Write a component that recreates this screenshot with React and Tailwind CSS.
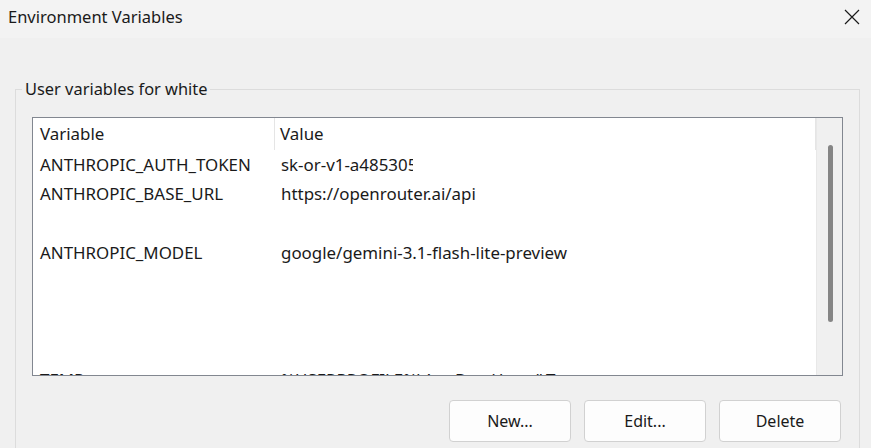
import React from 'react';

const rows = [
  { name: 'ANTHROPIC_AUTH_TOKEN', value: 'sk-or-v1-a485305', clip: true },
  { name: 'ANTHROPIC_BASE_URL', value: 'https://openrouter.ai/api' },
  { name: '', value: '' },
  { name: 'ANTHROPIC_MODEL', value: 'google/gemini-3.1-flash-lite-preview' },
];

const font = { fontFamily: '"Segoe UI", "Noto Sans", sans-serif' };

const Button = ({ children }) => (
  <button className="w-[122px] h-[42px] rounded-[4px] border border-[#d1d1d1] bg-[#fdfdfd] text-[16px] text-[#1a1a1a]">
    {children}
  </button>
);

export default function App() {
  return (
    <div className="w-[871px] h-[448px] overflow-hidden bg-[#f0f0f0] text-[#1a1a1a]" style={font}>
      <div className="h-[38px] bg-[#f3f3f3] flex items-center justify-between pl-2 pr-[11px]">
        <span className="text-[16.5px] -mt-[4px]">Environment Variables</span>
        <svg width="16" height="16" viewBox="0 0 16 16" className="-mt-[5px]">
          <path d="M1 1 L15 15 M15 1 L1 15" stroke="#1a1a1a" strokeWidth="1.2" fill="none" />
        </svg>
      </div>

      <div className="relative ml-[15px] mr-[11px] mt-[51px] h-[400px] border border-[#dcdcdc]">
        <span className="absolute -top-[13px] left-[6px] bg-[#f0f0f0] px-[3px] text-[16.4px] leading-[24px]">
          User variables for white
        </span>

        <div className="ml-[16px] mr-[16px] mt-[27px] h-[259px] border border-[#828790] bg-white flex overflow-hidden">
          <div className="flex-1 flex flex-col overflow-hidden text-[16.9px]">
            <div className="h-[32px] flex items-center shrink-0">
              <div className="w-[242px] pl-[7px] h-full flex items-center border-r border-[#e5e5e5]">Variable</div>
              <div className="pl-[5px] flex-1 h-full flex items-center border-r border-[#e5e5e5]">Value</div>
            </div>
            {rows.map((r, i) => (
              <div key={i} className="h-[29.4px] flex items-center shrink-0">
                <div className="w-[242px] shrink-0 pl-[7px] whitespace-nowrap">{r.name}</div>
                {r.clip ? (
                  <div className="ml-[6px] w-[132px] shrink-0 overflow-hidden whitespace-nowrap">{r.value}</div>
                ) : (
                  <div className="pl-[6px] whitespace-nowrap">{r.value}</div>
                )}
              </div>
            ))}
            <div className="h-[98px] shrink-0" />
            <div className="h-[29px] flex items-center shrink-0">
              <div className="w-[242px] pl-[7px] whitespace-nowrap">TEMP</div>
              <div className="pl-[6px] whitespace-nowrap">%USERPROFILE%\AppData\Local\Temp</div>
            </div>
          </div>
          <div className="w-[26px] bg-[#f0f0f0] border-l border-[#e8e8e8] flex justify-center pt-[27px]">
            <div className="w-[5px] h-[177px] rounded-full bg-[#858585] ml-[2px]" />
          </div>
        </div>

        <div className="flex justify-end gap-[13px] mr-[18px] mt-[24px]">
          <Button>New...</Button>
          <Button>Edit...</Button>
          <Button>Delete</Button>
        </div>
      </div>
    </div>
  );
}
